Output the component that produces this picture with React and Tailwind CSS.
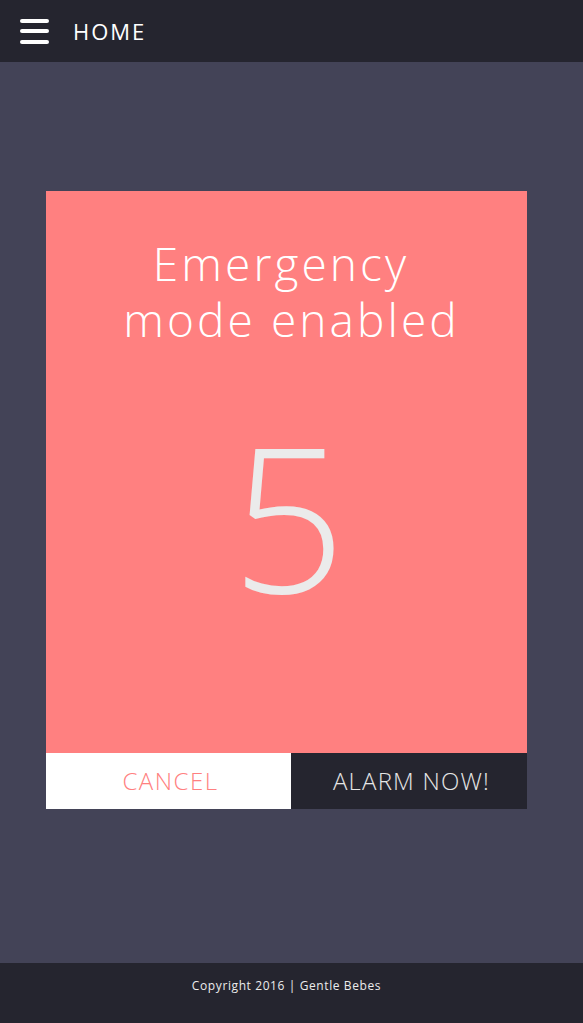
export default function App() {
  return (
    <div className="flex h-[1023px] w-full flex-col bg-[#434357] font-['Open_Sans',sans-serif]">
      <header className="flex h-[62px] shrink-0 items-center bg-[#25252f] pl-[20px]">
        <div className="flex h-[29px] w-[29px] flex-col justify-between py-[2px]">
          <span className="block h-[4px] w-full rounded-full bg-white" />
          <span className="block h-[4px] w-full rounded-full bg-white" />
          <span className="block h-[4px] w-full rounded-full bg-white" />
        </div>
        <span className="ml-[24px] text-[22px] leading-none tracking-[2px] text-white">HOME</span>
      </header>
      <main className="flex flex-1 flex-col pl-[46px] pt-[129px]">
        <div className="flex w-[481px] flex-col">
          <div className="flex h-[562px] flex-col items-center bg-[#ff8080] text-white">
            <h1 className="mt-[44px] text-center text-[46px] font-light leading-[56px] tracking-[3.1px]">
              <span className="block pr-[11px]">Emergency</span>
              <span className="block pl-[10px]">mode enabled</span>
            </h1>
            <div className="mt-[68px] pl-[4px] text-[201px] font-light leading-none text-[#ebebeb]">5</div>
          </div>
          <div className="flex h-[56px]">
            <button className="flex w-[245px] items-center justify-center bg-white pl-[4px] text-[24px] font-light tracking-[1.5px] text-[#ff8080]">
              CANCEL
            </button>
            <button className="flex flex-1 items-center justify-center bg-[#25252f] pl-[5px] text-[24px] font-light tracking-[1.2px] text-[#e6e6e6]">
              ALARM NOW!
            </button>
          </div>
        </div>
      </main>
      <footer className="flex h-[60px] shrink-0 items-center bg-[#25252f] pb-[14px]">
        <div className="w-[573px] text-center text-[12px] tracking-[0.6px] text-[#ececec]">
          Copyright 2016 | Gentle Bebes
        </div>
      </footer>
    </div>
  );
}
